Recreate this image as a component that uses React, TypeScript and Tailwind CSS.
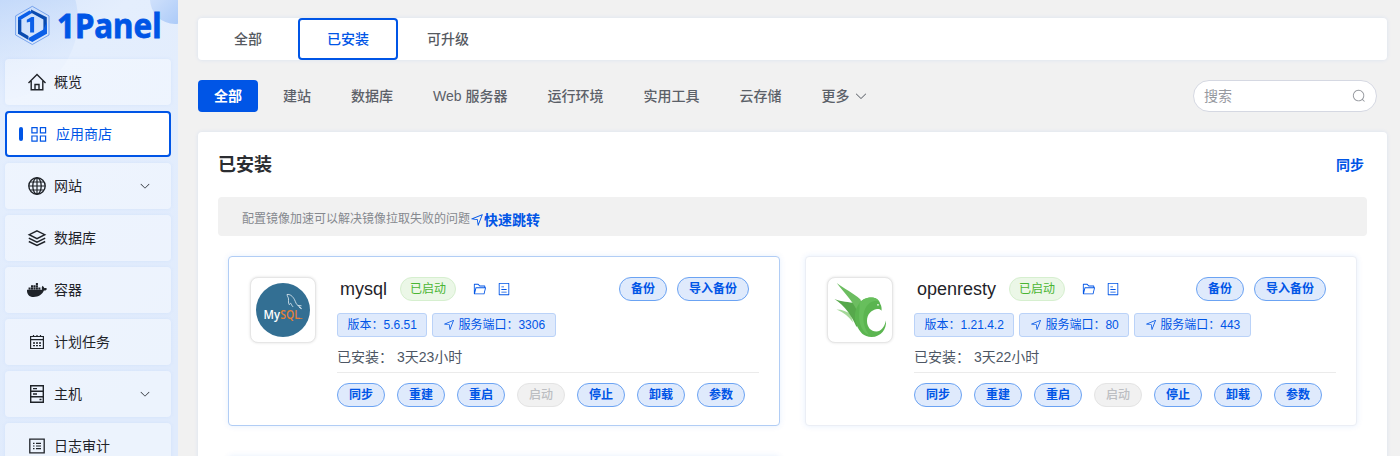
import type { ReactNode } from "react";
import { FaDocker } from "react-icons/fa";

const POSITION =
  "m249.6 417.088 319.744 43.072 39.168 310.272L845.12 178.88 249.6 417.088zm-129.024 47.168a32 32 0 0 1-7.68-61.44l777.792-311.04a32 32 0 0 1 41.6 41.6l-310.72 775.68a32 32 0 0 1-61.44-7.808L512 516.992l-391.424-52.736z";
const FOLDER =
  "M878.08 448H241.92l-96 384h636.16l96-384zM832 384v-64H485.76L357.504 192H128v448l57.92-231.744A32 32 0 0 1 216.96 384H832zm-24.96 512H96a32 32 0 0 1-32-32V160a32 32 0 0 1 32-32h287.872l128.384 128H864a32 32 0 0 1 32 32v96h23.04a32 32 0 0 1 31.04 39.744l-112 448A32 32 0 0 1 807.04 896z";
const TICKETS =
  "M192 128v768h640V128H192zm-32-64h704a32 32 0 0 1 32 32v832a32 32 0 0 1-32 32H160a32 32 0 0 1-32-32V96a32 32 0 0 1 32-32zm160 448h384v64H320v-64zm0-192h192v64H320v-64zm0 384h384v64H320v-64z";
const SEARCH =
  "m795.904 750.72 124.992 124.928a32 32 0 0 1-45.248 45.248L750.656 795.904a416 416 0 1 1 45.248-45.248zM480 832a352 352 0 1 0 0-704 352 352 0 0 0 0 704z";
const ARROW_DOWN =
  "M831.872 340.864 512 652.672 192.128 340.864a30.592 30.592 0 0 0-42.752 0 29.12 29.12 0 0 0 0 41.6L489.664 714.24a32 32 0 0 0 44.672 0l340.288-331.712a29.12 29.12 0 0 0 0-41.728 30.592 30.592 0 0 0-42.752 0z";

function Glyph({ d, className }: { d: string; className: string }) {
  return (
    <svg viewBox="0 0 1024 1024" fill="currentColor" className={`shrink-0 ${className}`}>
      <path d={d} />
    </svg>
  );
}

function LineIcon({ children }: { children: ReactNode }) {
  return (
    <svg viewBox="0 0 20 20" fill="none" stroke="currentColor" strokeWidth="1.4" className="size-5 shrink-0">
      {children}
    </svg>
  );
}

const icons = {
  home: (
    <LineIcon>
      <path d="M1.5 11 10 2.6 18.5 11M4.2 9v8.8h11.6V9M8 17.5v-5h4v5" />
    </LineIcon>
  ),
  store: (
    <LineIcon>
      <path d="M2.9 3.6h5.2v5.2H2.9zM11.4 3.6h5.2v5.2h-5.2zM2.9 12h5.2v5.2H2.9zM11.4 12h5.2v5.2h-5.2z" strokeWidth="1.2" />
    </LineIcon>
  ),
  globe: (
    <LineIcon>
      <circle cx="10" cy="10" r="8.2" />
      <ellipse cx="10" cy="10" rx="4.2" ry="8.2" strokeWidth="1.3" />
      <path d="M10 2v16M2 10h16M3.2 6h13.6M3.2 14h13.6" strokeWidth="1.2" />
    </LineIcon>
  ),
  layers: (
    <LineIcon>
      <path d="M10 2.8 17.8 6.7 10 10.6 2.2 6.7zM1.8 10.2 10 14.2l8.2-4M1.8 13.5 10 17.5l8.2-4" />
    </LineIcon>
  ),
  docker: <FaDocker className="size-5 shrink-0" />,
  calendar: (
    <LineIcon>
      <path d="M3.6 4.5h12.8v12H3.6zM3.6 7.7h12.8M6.5 3v2M10 3v2M13.5 3v2" strokeWidth="1.2" />
      <path d="M6 11h2M9 11h2M12 11h2M6 13.7h2M9 13.7h2M12 13.7h2" strokeWidth="1.3" />
    </LineIcon>
  ),
  server: (
    <LineIcon>
      <path d="M3.7 1.7h12.6v16.6H3.7zM3.7 7.3h12.6M3.7 12.7h12.6M6 4.6h4M6 10h4M12.5 15.5h2" />
    </LineIcon>
  ),
  log: (
    <LineIcon>
      <path d="M2.8 3.2h14.4v13.6H2.8z" strokeWidth="1.3" />
      <path d="M6 7.3h1.5M9 7.3h5M6 10h1.5M9 10h5M6 12.7h1.5M9 12.7h5" strokeWidth="1.2" />
    </LineIcon>
  ),
};

function Logo() {
  return (
    <svg viewBox="0 0 178 59" className="h-[59px] w-full shrink-0">
      <path d="M32.3 6.3 49 15.9V35L32.3 44.5 15.6 35V15.9z" fill="none" stroke="#5f93e8" strokeWidth="0.8" />
      <path d="M18 17.2 29.5 10.6 33 12.6 21.2 19.5V32L18 34z" fill="#0b5fe8" />
      <path d="M31 9.4 46.8 17.2V34L43.4 31.8V19.4L31.2 12.8z" fill="#0a4bb0" />
      <path d="M18 20V33.7L28.5 39.9V36L21.2 31.8V20z" fill="#0a4bb0" />
      <path d="M46.8 22V33.7L32.3 42 29 40.2V37.8L43.4 29.5z" fill="#0b5fe8" />
      <path d="M26.8 19.8 31.5 17h2.6v15.6h-4V21.8l-3.3.6z" fill="#0b5fe8" />
      <text
        x="57"
        y="38.3"
        textLength="104.5"
        lengthAdjust="spacingAndGlyphs"
        fill="#0055e6"
        stroke="#0055e6"
        strokeWidth="0.8"
        className="font-['Noto_Sans',sans-serif] text-[34px] font-bold"
      >
        1Panel
      </text>
    </svg>
  );
}

const menu: { label: string; icon: ReactNode; active?: boolean; more?: boolean }[] = [
  { label: "概览", icon: icons.home },
  { label: "应用商店", icon: icons.store, active: true },
  { label: "网站", icon: icons.globe, more: true },
  { label: "数据库", icon: icons.layers },
  { label: "容器", icon: icons.docker },
  { label: "计划任务", icon: icons.calendar },
  { label: "主机", icon: icons.server, more: true },
  { label: "日志审计", icon: icons.log },
];

function Sidebar() {
  return (
    <aside className="relative h-full w-[178px] shrink-0 overflow-hidden bg-[#e1ecfd]">
      <svg viewBox="0 0 178 456" className="absolute inset-0 h-full w-full">
        <defs>
          <linearGradient id="wash" x1="0" y1="0" x2="0.3" y2="1">
            <stop offset="0" stopColor="#d8e6fc" />
            <stop offset="0.2" stopColor="#e4eefd" />
            <stop offset="1" stopColor="#e0ebfc" />
          </linearGradient>
          <linearGradient id="bubble" x1="0.5" y1="0.1" x2="0.7" y2="1">
            <stop offset="0" stopColor="#b0cdf8" />
            <stop offset="1" stopColor="#e1ecfd" stopOpacity="0.2" />
          </linearGradient>
          <linearGradient id="corner" x1="0" y1="0.4" x2="0.6" y2="1">
            <stop offset="0" stopColor="#d3e3fc" />
            <stop offset="1" stopColor="#abcaf8" />
          </linearGradient>
        </defs>
        <rect width="178" height="456" fill="url(#wash)" />
        <circle cx="-2" cy="20" r="80" fill="url(#bubble)" />
        <circle cx="175" cy="-1" r="25" fill="url(#corner)" />
      </svg>
      <div className="relative flex flex-col">
        <Logo />
        <nav className="flex flex-col gap-1.5 pr-[7px] pl-[5px]">
          {menu.map((item) =>
            item.active ? (
              <div
                key={item.label}
                className="flex h-[46px] shrink-0 items-center rounded border-2 border-[#0055e6] bg-white pl-3 text-[#0055e6]"
              >
                <span className="mr-1.5 h-3.5 w-1 rounded-sm bg-[#0055e6]" />
                {item.icon}
                <span className="ml-[7px]">{item.label}</span>
              </div>
            ) : (
              <div
                key={item.label}
                className="flex h-[46px] shrink-0 items-center rounded bg-white/40 pr-5 pl-[22px] text-[#1f2329] shadow-[0_0_4px_rgba(0,94,235,0.06)]"
              >
                {item.icon}
                <span className="ml-[7px] flex-1">{item.label}</span>
                {item.more && <Glyph d={ARROW_DOWN} className="size-3" />}
              </div>
            ),
          )}
        </nav>
      </div>
    </aside>
  );
}

function Pill({ label, disabled }: { label: string; disabled?: boolean }) {
  return (
    <button
      className={`flex h-6 items-center rounded-full border px-[11px] text-xs ${
        disabled
          ? "border-[#e4e4e4] bg-[#f1f1f1] font-medium text-[#bcbec2]"
          : "border-[#6ba3f3] bg-[#dfeafc] font-bold text-[#0055e6]"
      }`}
    >
      {label}
    </button>
  );
}

function Tag({ label, link }: { label: string; link?: boolean }) {
  return (
    <span className="flex h-6 items-center rounded-[3px] border border-[#bad2f8] bg-[#dfeafc] px-[9.5px] text-xs text-[#0055e6]">
      {link && <Glyph d={POSITION} className="mr-[3.5px] size-3" />}
      {label}
    </span>
  );
}

function MysqlLogo() {
  return (
    <svg viewBox="0 0 54 54" className="size-[54px]">
      <circle cx="27" cy="27" r="27" fill="#336f93" />
      <path
        d="M31 11.5c3-.6 5.8 1.8 7.5 5.2 1.3 2.6 1.7 4.8 3.6 6l3.7 3M31 11.5c.3 2 1.4 2.8 1.5 4.4.1 2-.4 4.2.8 5.8.8-.7.7-1.5 1.3-1.5.7.5 1 2.4 2.5 3.7M42 22.5l3.5.3M43 24l2.2 1.8"
        fill="none"
        stroke="#e9f1f6"
        strokeWidth="0.8"
      />
      <g className="font-['Open_Sans',sans-serif] text-[13px] font-semibold">
        <text x="7.5" y="36" fill="#fff" textLength="16.5" lengthAdjust="spacingAndGlyphs">
          My
        </text>
        <text x="24.3" y="36" fill="#e57f35" textLength="19.5" lengthAdjust="spacingAndGlyphs">
          SQL
        </text>
      </g>
      <path d="M44 35.5h2.5" stroke="#dc7c38" strokeWidth="0.8" />
    </svg>
  );
}

function OpenrestyLogo() {
  return (
    <svg viewBox="0 0 54 54" className="size-[54px]">
      <path d="M3.5 26.500c5.500 0 11 2 14.500 5l2 8C16 34 11 29.500 3.500 26.500z" fill="#a5d899" />
      <path d="M1.500 16c7 3 14 2.500 21 4.500L27 36l-3.500 8C19 33 12 23 1.500 16z" fill="#56a84b" />
      <path d="M3.700 0C12 6.500 20 9.500 27.500 16.500L29 22l-3 10C21 19 12 11 3.700 0z" fill="#6cbd60" />
      <path
        d="M26.500 20c3-4 7.500-5.500 12-5.500 4.500 0 8 2.500 8.800 6.500 1.200 2 1.500 4.500 1.200 6.700-1-1.500-2.500-2-4.500-1.700-6 1-10 5.500-10 12 0 6.500 4.300 10.700 9.500 10.500 4.500-.3 7.700-4 9.500-11 .8 8.500-5 16.500-14.400 16.500-8 0-12-5-15.100-12C21 35 21 27 26.500 20z"
        fill="#5bb550"
      />
      <path
        d="M26.500 20c3-4 7.500-5.500 12-5.500 3 0 5.500 1.200 7.200 3.200-8-.7-14 4.300-15.200 14.300-.9 7.500 1.500 14 5.500 20-5-2-8.500-7.500-9.500-14C25.500 31 27 26 26.500 20z"
        fill="#67bf5c"
      />
      <circle cx="45" cy="21.8" r="0.9" fill="#e9f7e5" />
    </svg>
  );
}

const actions = ["同步", "重建", "重启", "启动", "停止", "卸载", "参数"];

interface AppInfo {
  name: string;
  version: string;
  ports: string[];
  age: string;
  logo: ReactNode;
  highlighted?: boolean;
}

const apps: AppInfo[] = [
  { name: "mysql", version: "5.6.51", ports: ["3306"], age: "3天23小时", logo: <MysqlLogo />, highlighted: true },
  { name: "openresty", version: "1.21.4.2", ports: ["80", "443"], age: "3天22小时", logo: <OpenrestyLogo /> },
];

function AppCard({ app }: { app: AppInfo }) {
  return (
    <article
      className={`flex h-[170px] rounded border bg-white pt-5 pr-5 pl-[21px] shadow-[0_0_6px_rgba(0,94,235,0.1)] ${
        app.highlighted ? "border-[#b1cdf5]" : "border-[#ebeef5]"
      }`}
    >
      <div className="mr-[21px] flex size-[66px] shrink-0 items-center justify-center rounded-lg border border-[#e6e6e6] bg-white shadow-[0_0_3px_rgba(0,0,0,0.12)]">
        {app.logo}
      </div>
      <div className="flex min-w-0 flex-1 flex-col">
        <div className="flex h-6 items-center pr-2.5 pl-[3px]">
          <span className="text-lg text-[#1f2329]">{app.name}</span>
          <span className="ml-[13px] flex h-6 items-center rounded-full border border-[#d6efcf] bg-[#ebf7e7] px-[9px] text-xs text-[#4ab533]">
            已启动
          </span>
          <Glyph d={FOLDER} className="ml-[17px] size-3.5 text-[#0055e6]" />
          <Glyph d={TICKETS} className="ml-2.5 size-3.5 text-[#0055e6]" />
          <div className="ml-auto flex gap-2.5">
            <Pill label="备份" />
            <Pill label="导入备份" />
          </div>
        </div>
        <div className="mt-3 flex gap-[5px]">
          <Tag label={`版本：${app.version}`} />
          {app.ports.map((port) => (
            <Tag key={port} label={`服务端口：${port}`} link />
          ))}
        </div>
        <div className="mt-2.5 flex h-[26px] items-center border-b border-[#ebebeb] pb-[5px] text-[#4d5664]">
          <span className="w-[60px]">已安装：</span>
          <span>{app.age}</span>
        </div>
        <div className="mt-2.5 flex gap-3">
          {actions.map((label) => (
            <Pill key={label} label={label} disabled={label === "启动"} />
          ))}
        </div>
      </div>
    </article>
  );
}

const tabs = ["全部", "已安装", "可升级"];
const categories = ["建站", "数据库", "Web 服务器", "运行环境", "实用工具", "云存储"];

export default function App() {
  return (
    <div className="flex h-[456px] w-[1400px] overflow-hidden bg-[#f1f1f1] font-['Liberation_Sans','Noto_Sans_CJK_SC',sans-serif] text-sm">
      <Sidebar />
      <main className="flex min-w-0 flex-1 flex-col pt-[18px] pr-[13px] pl-5">
        <div className="flex h-[42px] shrink-0 rounded bg-white font-medium text-[#55595f] shadow-[0_0_4px_rgba(0,94,235,0.1)]">
          {tabs.map((tab) => (
            <button
              key={tab}
              className={`w-[100px] rounded ${tab === "已安装" ? "border-2 border-[#0055e6] text-[#0055e6]" : ""}`}
            >
              {tab}
            </button>
          ))}
        </div>

        <div className="mt-5 flex h-8 shrink-0 items-center pr-2.5 font-medium text-[#5b6068]">
          <button className="mr-[5px] h-8 w-[60px] rounded bg-[#0055e6] font-bold text-white">全部</button>
          {categories.map((category) => (
            <button key={category} className="px-5">
              {category}
            </button>
          ))}
          <button className="flex items-center px-5">
            更多
            <Glyph d={ARROW_DOWN} className="ml-[5px] size-3.5" />
          </button>
          <div className="ml-auto flex h-8 w-[184px] items-center justify-between rounded-full border border-[#d5d8e2] bg-white px-2.5 font-normal text-[#96999f]">
            <span>搜索</span>
            <Glyph d={SEARCH} className="size-3.5" />
          </div>
        </div>

        <section className="mt-5 h-[420px] shrink-0 rounded bg-white px-5 shadow-[0_0_4px_rgba(0,94,235,0.1)]">
          <header className="flex h-[65px] items-center justify-between pr-[3px]">
            <h1 className="text-lg font-bold text-[#2b2d31]">已安装</h1>
            <button className="font-bold text-[#0055e6]">同步</button>
          </header>
          <div className="flex h-[39px] items-center rounded bg-[#f1f1f1] pl-6">
            <span className="pt-[5px] text-xs leading-none text-[#85888e]">配置镜像加速可以解决镜像拉取失败的问题</span>
            <span className="flex items-center pt-1.5 font-bold text-[#0055e6]">
              <Glyph d={POSITION} className="size-3.5" />
              快速跳转
            </span>
          </div>
          <div className="mt-5 grid grid-cols-[552px_552px] gap-x-[25px] gap-y-[30px] px-2.5">
            {apps.map((app) => (
              <AppCard key={app.name} app={app} />
            ))}
            <article className="h-[170px] rounded border border-[#ebeef5] bg-white shadow-[0_0_6px_rgba(0,94,235,0.1)]" />
          </div>
        </section>
      </main>
    </div>
  );
}
